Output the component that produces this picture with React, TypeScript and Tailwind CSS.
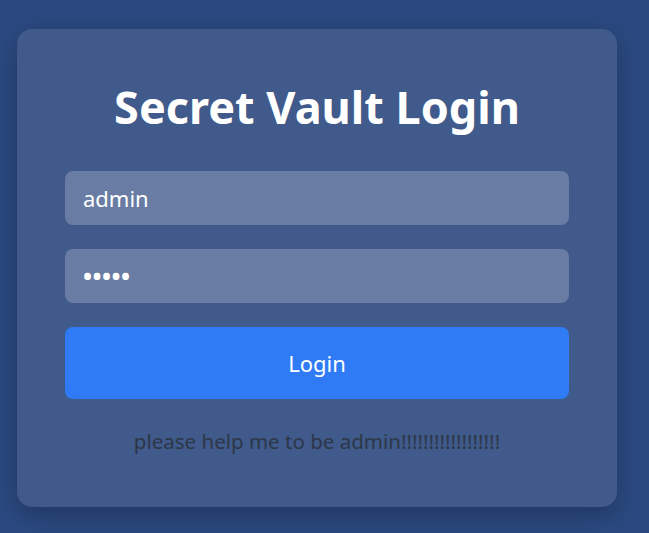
export default function App() {
  return (
    <div className="min-h-screen w-full bg-[#2b4980] pl-[17px] pt-[29px]" style={{ fontFamily: '"Noto Sans", "Open Sans", sans-serif' }}>
      <div className="w-[600px] h-[478px] rounded-[15px] bg-[#3f5a8b] shadow-[0_8px_24px_rgba(0,0,0,0.25)] px-[48px] pt-[51px] flex flex-col">
        <h1 className="text-[45px] leading-[54px] font-bold text-white text-center">Secret Vault Login</h1>
        <div className="mt-[37px] flex flex-col gap-[24px]">
          <div className="h-[54px] rounded-[8px] bg-[#687ca4] px-[18px] flex items-center text-white text-[22px]">admin</div>
          <div className="h-[54px] rounded-[8px] bg-[#687ca4] px-[18px] flex items-center text-white text-[24px] font-bold tracking-[0.5px]">•••••</div>
          <button className="h-[72px] rounded-[8px] bg-[#2f7bf5] text-white text-[22px]">Login</button>
        </div>
        <p className="mt-[27px] text-center text-[20.5px] leading-[30px] text-[#2d3748]">please help me to be admin!!!!!!!!!!!!!!!!!!</p>
      </div>
    </div>
  );
}
